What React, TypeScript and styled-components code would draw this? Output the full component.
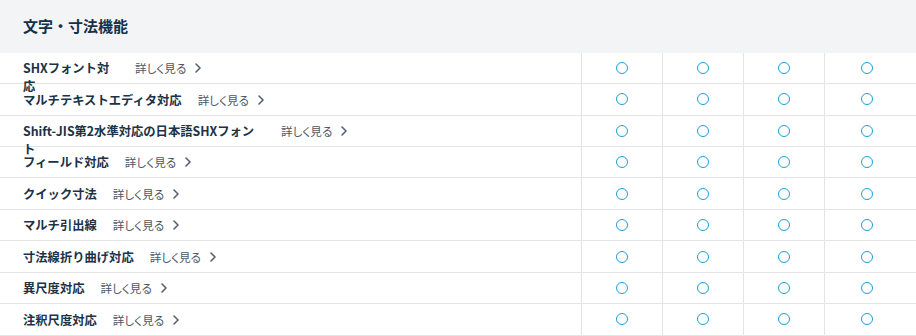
import React from 'react';
import styled, { createGlobalStyle } from 'styled-components';

const GlobalStyle = createGlobalStyle`
    body {
        margin: 0;
        background: #fff;
        font-family: "Noto Sans CJK JP", "Noto Sans", sans-serif;
    }
`;

const FEATURES = [
    { name: 'SHXフォント対応', wrapAt: 96 },
    { name: 'マルチテキストエディタ対応' },
    { name: 'Shift-JIS第2水準対応の日本語SHXフォント', wrapAt: 242 },
    { name: 'フィールド対応' },
    { name: 'クイック寸法' },
    { name: 'マルチ引出線' },
    { name: '寸法線折り曲げ対応' },
    { name: '異尺度対応' },
    { name: '注釈尺度対応' },
];

const PLANS = 4;

const Section = styled.section`
    width: 100%;
`;

const SectionHeader = styled.h2`
    margin: 0;
    height: 52.7px;
    box-sizing: border-box;
    padding: 0 0 2px 23px;
    display: flex;
    align-items: center;
    background: #f3f4f6;
    color: #15314a;
    font-size: 15px;
    font-weight: 700;
`;

// fixed-height rows: a wrapped title spills over the border, as on the live page
const Row = styled.div`
    display: grid;
    grid-template-columns: 581px repeat(3, 81px) 1fr;
    grid-template-rows: minmax(0, 1fr);
    height: 31.45px;
    box-sizing: border-box;
    border-bottom: 1px solid #e1e5e8;
`;

const LabelCell = styled.div`
    display: flex;
    align-items: flex-start;
    padding: 6.4px 0 0 23px;
    line-height: 18px;
    min-width: 0;
    min-height: 0;
`;

const Title = styled.span<{ $wrapAt?: number }>`
    max-width: ${p => (p.$wrapAt ? `${p.$wrapAt}px` : 'none')};
    flex-shrink: 0;
    color: #1b3247;
    font-size: 12.3px;
    font-weight: 700;
`;

const MoreLink = styled.a`
    display: inline-flex;
    align-items: center;
    gap: 9px;
    margin-left: 16px;
    color: #4c5764;
    font-size: 11.6px;
    font-feature-settings: "palt";
    text-decoration: none;
    white-space: nowrap;
    cursor: pointer;
`;

const MarkCell = styled.div`
    display: flex;
    align-items: center;
    justify-content: center;
    min-height: 0;
    border-left: 1px solid #e1e5e8;

    &:last-child {
        padding-right: 7px;
    }
`;

const Circle = styled.span`
    width: 12px;
    height: 12px;
    box-sizing: border-box;
    border: 1.7px solid #1a9fda;
    border-radius: 50%;
`;

function Chevron() {
    return (
        <svg width="6" height="10" viewBox="0 0 6 10" fill="none">
            <polyline points="1,1 5,5 1,9" stroke="#556170" strokeWidth="1.6" strokeLinecap="round" strokeLinejoin="round" />
        </svg>
    );
}

export default function App() {
    return (
        <>
            <GlobalStyle />
            <Section>
                <SectionHeader>文字・寸法機能</SectionHeader>
                {FEATURES.map(feature => (
                    <Row key={feature.name}>
                        <LabelCell>
                            <Title $wrapAt={feature.wrapAt}>{feature.name}</Title>
                            <MoreLink>詳しく見る<Chevron /></MoreLink>
                        </LabelCell>
                        {Array.from({ length: PLANS }, (_, i) => (
                            <MarkCell key={i}><Circle /></MarkCell>
                        ))}
                    </Row>
                ))}
            </Section>
        </>
    );
}
